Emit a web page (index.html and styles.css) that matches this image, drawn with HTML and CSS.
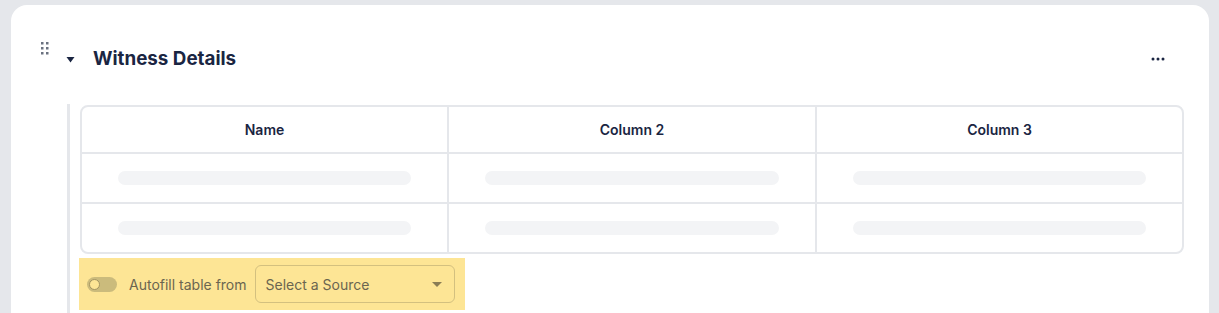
FILE: index.html
```html
<!DOCTYPE html>
<html lang="en">
<head>
    <meta charset="UTF-8">
    <meta name="viewport" content="width=device-width, initial-scale=1.0">
    <title>Witness Details</title>
    <link rel="stylesheet" href="styles.css">
</head>
<body>

    <div class="card">
        <div class="section-header">
            <span class="drag-handle">
                <svg width="8" height="13" viewBox="0 0 8 13">
                    <rect x="0" y="0" width="2.5" height="2.5" fill="#6b7280"/>
                    <rect x="5" y="0" width="2.5" height="2.5" fill="#6b7280"/>
                    <rect x="0" y="5" width="2.5" height="2.5" fill="#6b7280"/>
                    <rect x="5" y="5" width="2.5" height="2.5" fill="#6b7280"/>
                    <rect x="0" y="10" width="2.5" height="2.5" fill="#6b7280"/>
                    <rect x="5" y="10" width="2.5" height="2.5" fill="#6b7280"/>
                </svg>
            </span>
            <button class="collapse-btn">
                <svg width="9" height="7" viewBox="0 0 9 7">
                    <path d="M0.5 1 L8.5 1 L4.5 6.5 Z" fill="#1a2542"/>
                </svg>
            </button>
            <h2 class="section-title">Witness Details</h2>
            <button class="more-btn">
                <svg width="14" height="4" viewBox="0 0 14 4">
                    <circle cx="2" cy="2" r="1.5" fill="#1a2542"/>
                    <circle cx="7" cy="2" r="1.5" fill="#1a2542"/>
                    <circle cx="12" cy="2" r="1.5" fill="#1a2542"/>
                </svg>
            </button>
        </div>

        <div class="section-body">
            <div class="table-wrap">
                <table class="data-table">
                    <colgroup>
                        <col class="col-first">
                        <col class="col-mid">
                        <col>
                    </colgroup>
                    <thead>
                        <tr>
                            <th>Name</th>
                            <th>Column 2</th>
                            <th>Column 3</th>
                        </tr>
                    </thead>
                    <tbody>
                        <tr>
                            <td><div class="skeleton"></div></td>
                            <td><div class="skeleton"></div></td>
                            <td><div class="skeleton"></div></td>
                        </tr>
                        <tr>
                            <td><div class="skeleton"></div></td>
                            <td><div class="skeleton"></div></td>
                            <td><div class="skeleton"></div></td>
                        </tr>
                    </tbody>
                </table>
            </div>

            <div class="autofill">
                <span class="toggle"><span class="toggle-knob"></span></span>
                <span class="autofill-label">Autofill table from</span>
                <div class="source-select">
                    <span>Select a Source</span>
                    <svg width="10" height="5" viewBox="0 0 10 5">
                        <path d="M0 0 L10 0 L5 5 Z" fill="#8a7d55"/>
                    </svg>
                </div>
            </div>
        </div>
    </div>

</body>
</html>
```

FILE: styles.css
```css
body {
    font-family: 'Inter', 'Liberation Sans', sans-serif;
    background-color: #e5e7eb; /* light gray page */
    margin: 0;
    padding: 5px 10px 0 11px;
    height: 313px;
    overflow: hidden;
    box-sizing: border-box;
}

.card {
    background-color: #ffffff;
    border-radius: 16px 16px 0 0;
    padding: 37px 25px 0 30px;
    height: 308px;
    box-sizing: border-box;
    display: flex;
    flex-direction: column;
}

.section-header {
    display: flex;
    align-items: center;
    height: 32px;
    flex-shrink: 0;
}

.drag-handle {
    align-self: flex-start;
    display: flex;
    width: 8px;
}

.collapse-btn,
.more-btn {
    background: none;
    border: none;
    padding: 0;
    cursor: pointer;
    display: flex;
    align-items: center;
}

.collapse-btn {
    margin-left: 17px;
    margin-top: 2px;
}

.section-title {
    margin: 0 0 0 18px;
    font-size: 18.8px;
    font-weight: 700;
    color: #1a2542;
    flex: 1;
}

.more-btn {
    margin-right: 19px;
    margin-top: 2px;
}

.section-body {
    flex: 1;
    margin-top: 30px;
    margin-left: 26px;
    border-left: 3px solid #e5e7eb;
    padding: 1px 0 0 10px;
}

.table-wrap {
    border: 2px solid #e5e7eb;
    border-radius: 8px;
    overflow: hidden;
}

.data-table {
    width: 100%;
    border-collapse: separate;
    border-spacing: 0;
    table-layout: fixed;
}

.col-first {
    width: 367px;
}

.col-mid {
    width: 368px;
}

.data-table th {
    height: 45px;
    font-size: 14px;
    font-weight: 600;
    color: #1a2542;
    text-align: center;
    padding: 0;
    border-bottom: 2px solid #e5e7eb;
    border-right: 2px solid #e5e7eb;
}

.data-table td {
    height: 48px;
    padding: 0 36px;
    border-right: 2px solid #e5e7eb;
    border-bottom: 2px solid #e5e7eb;
}

.data-table th:last-child,
.data-table td:last-child {
    border-right: none;
}

.data-table tbody tr:last-child td {
    border-bottom: none;
}

.skeleton {
    height: 14px;
    border-radius: 7px;
    background-color: #f3f4f6;
}

.autofill {
    display: inline-flex;
    align-items: center;
    margin-top: 4px;
    margin-left: -1px;
    padding: 7px 10px 7px 8px;
    background-color: #fde595; /* highlighted yellow */
}

.toggle {
    width: 30px;
    height: 15px;
    border-radius: 8px;
    background-color: #cbbb7c;
    display: flex;
    align-items: center;
    padding: 0 2px;
    box-sizing: border-box;
}

.toggle-knob {
    width: 9px;
    height: 9px;
    border-radius: 50%;
    background-color: #fde595;
    border: 1px solid #a39462;
}

.autofill-label {
    margin-left: 12px;
    font-size: 14px;
    color: #6b6550;
}

.source-select {
    margin-left: 8px;
    width: 200px;
    height: 38px;
    box-sizing: border-box;
    border: 1px solid #d3c07f;
    border-radius: 6px;
    display: flex;
    align-items: center;
    justify-content: space-between;
    padding: 0 12px 0 10px;
    font-size: 14px;
    color: #6b6550;
}
```
